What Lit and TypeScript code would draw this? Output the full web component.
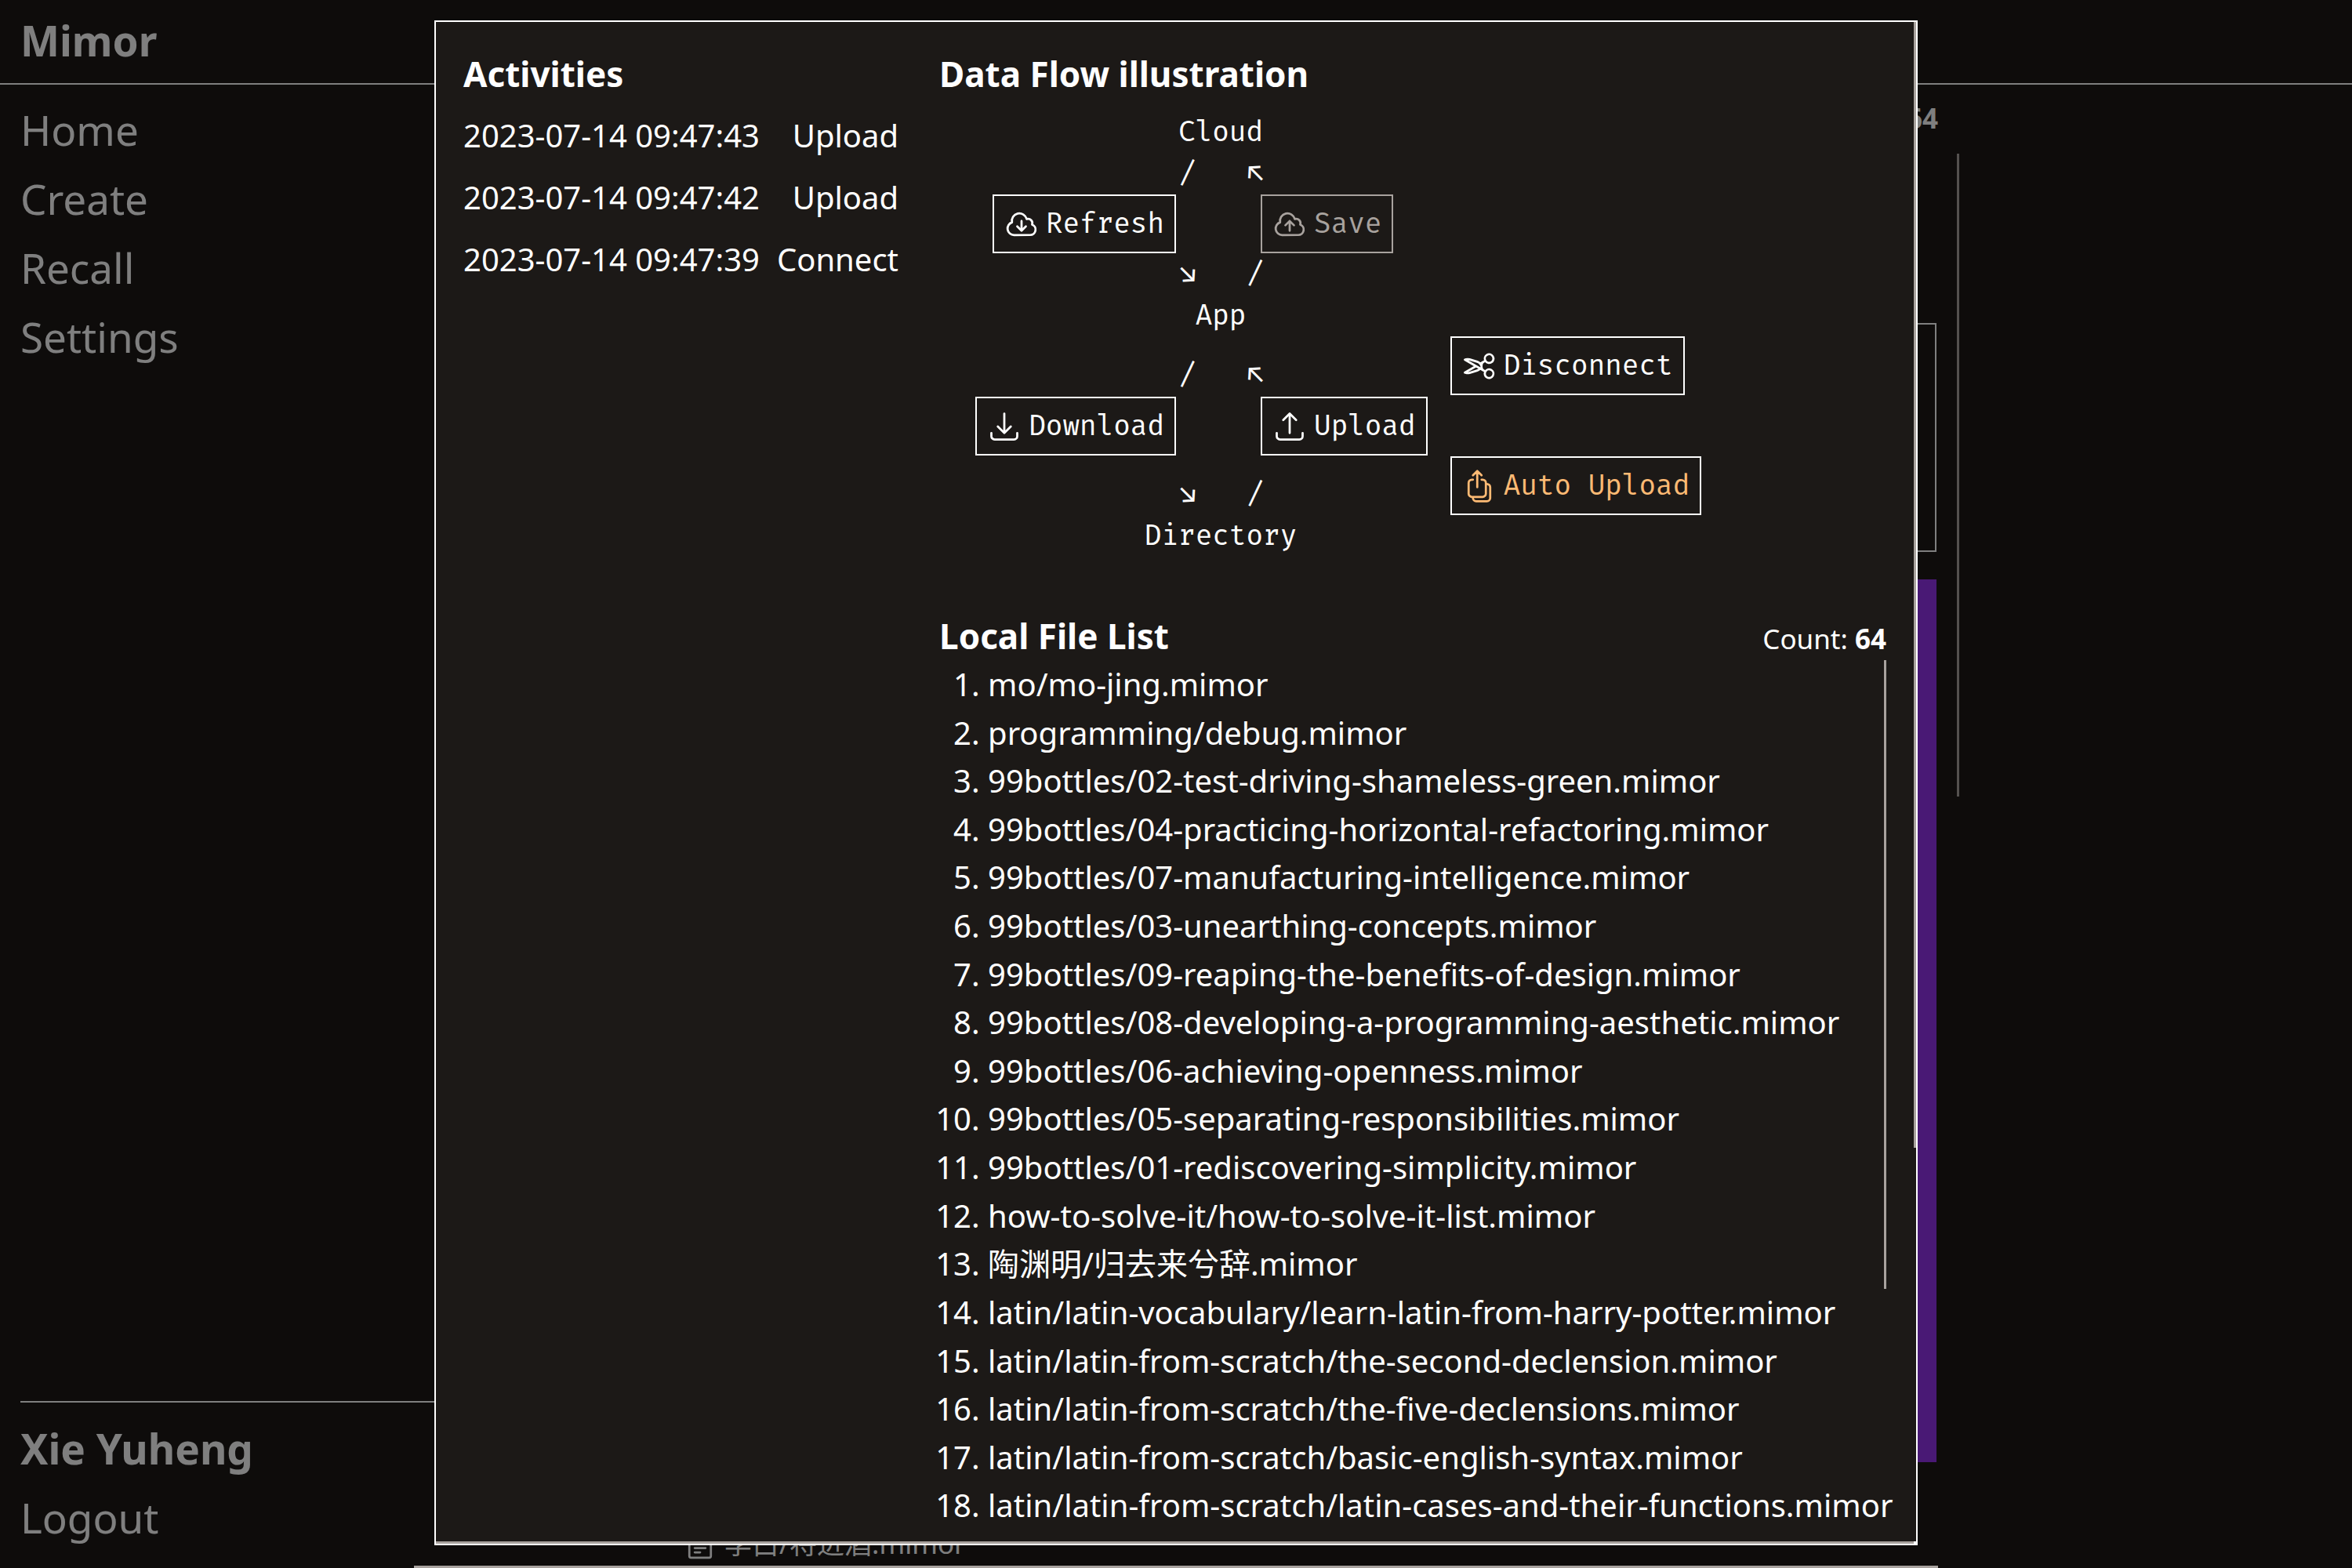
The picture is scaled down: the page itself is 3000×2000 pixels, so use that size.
import { LitElement, html, css, svg } from "lit";
import { customElement, property } from "lit/decorators.js";

const ICONS: Record<string, string[]> = {
  "cloud-down": [
    "M12 9.75v6.75m0 0l-3-3m3 3l3-3m-8.25 6a4.5 4.5 0 01-1.41-8.775 5.25 5.25 0 0110.233-2.33 3 3 0 013.758 3.848A3.752 3.752 0 0118 19.5H6.75z",
  ],
  "cloud-up": [
    "M12 16.5V9.75m0 0l3 3m-3-3l-3 3M6.75 19.5a4.5 4.5 0 01-1.41-8.775 5.25 5.25 0 0110.233-2.33 3 3 0 013.758 3.848A3.752 3.752 0 0118 19.5H6.75z",
  ],
  "tray-down": [
    "M3 16.5v2.25A2.25 2.25 0 005.25 21h13.5A2.25 2.25 0 0021 18.75V16.5M16.5 12L12 16.5m0 0L7.5 12m4.5 4.5V3",
  ],
  "tray-up": [
    "M3 16.5v2.25A2.25 2.25 0 005.25 21h13.5A2.25 2.25 0 0021 18.75V16.5m-13.5-9L12 3m0 0l4.5 4.5M12 3v13.5",
  ],
  scissors: [
    "M7.848 8.25l1.536.887M7.848 8.25a3 3 0 11-5.196-3 3 3 0 015.196 3zm1.536.887a2.165 2.165 0 011.083 1.839c.005.351.054.695.14 1.024M9.384 9.137l2.077 1.199M7.848 15.75l1.536-.887m-1.536.887a3 3 0 11-5.196 3 3 3 0 015.196-3zm1.536-.887a2.165 2.165 0 001.083-1.838c.005-.352.054-.695.14-1.025m-1.223 2.863l2.077-1.199m0-3.328a4.323 4.323 0 012.068-1.379l5.325-1.628a4.5 4.5 0 012.48-.044l.803.215-7.794 4.5m-2.882-1.664A4.331 4.331 0 0010.607 12m3.736 0l7.794 4.5-.802.215a4.5 4.5 0 01-2.48-.043l-5.326-1.629a4.324 4.324 0 01-2.068-1.379M14.343 12l-2.882 1.664",
  ],
  stack: [
    "M7.5 7.5h-.75A2.25 2.25 0 004.5 9.75v7.5a2.25 2.25 0 002.25 2.25h7.5a2.25 2.25 0 002.25-2.25v-7.5a2.25 2.25 0 00-2.25-2.25h-.75m0-3l-3-3m0 0l-3 3m3-3v11.25m6-2.25h.75a2.25 2.25 0 012.25 2.25v7.5a2.25 2.25 0 01-2.25 2.25h-7.5a2.25 2.25 0 01-2.25-2.25v-.75",
  ],
  document: [
    "M19.5 14.25v-2.625a3.375 3.375 0 00-3.375-3.375h-1.5A1.125 1.125 0 0113.5 7.125v-1.5a3.375 3.375 0 00-3.375-3.375H8.25m0 12.75h7.5m-7.5 3H12M10.5 2.25H5.625c-.621 0-1.125.504-1.125 1.125v17.25c0 .621.504 1.125 1.125 1.125h12.75c.621 0 1.125-.504 1.125-1.125V11.25a9 9 0 00-9-9z",
  ],
};

@customElement("line-icon")
class LineIcon extends LitElement {
  @property() name = "document";
  @property({ type: Boolean, reflect: true }) flip = false;

  static styles = css`
    :host {
      display: block;
      flex: none;
      width: 44px;
      height: 44px;
    }
    :host([flip]) {
      transform: scaleX(-1);
    }
    svg {
      display: block;
      width: 100%;
      height: 100%;
    }
  `;

  render() {
    return html`<svg
      viewBox="0 0 24 24"
      fill="none"
      stroke="currentColor"
      stroke-width="1.5"
      stroke-linecap="round"
      stroke-linejoin="round"
      aria-hidden="true"
    >
      ${(ICONS[this.name] ?? []).map((d) => svg`<path d=${d}></path>`)}
    </svg>`;
  }
}

@customElement("flow-button")
class FlowButton extends LitElement {
  @property() icon = "";
  @property() label = "";
  @property({ type: Boolean }) disabled = false;
  @property({ type: Boolean }) active = false;
  @property({ type: Boolean }) mirrored = false;

  static styles = css`
    :host {
      display: block;
    }
    .button {
      display: flex;
      align-items: center;
      gap: 9px;
      padding: 9px 13px;
      border: 2px solid #fff;
      background: none;
      color: #fff;
      font: inherit;
      line-height: 53px;
      white-space: nowrap;
    }
    .button:disabled {
      border-color: #a8a29e;
      color: #a8a29e;
    }
    .active {
      color: #fdba74;
    }
  `;

  render() {
    return html`<button
      type="button"
      class="button ${this.active ? "active" : ""}"
      ?disabled=${this.disabled}
    >
      <line-icon name=${this.icon} ?flip=${this.mirrored}></line-icon>
      <span>${this.label}</span>
    </button>`;
  }
}

const ACTIVITIES = [
  ["2023-07-14 09:47:43", "Upload"],
  ["2023-07-14 09:47:42", "Upload"],
  ["2023-07-14 09:47:39", "Connect"],
];

const FILES = [
  "mo/mo-jing.mimor",
  "programming/debug.mimor",
  "99bottles/02-test-driving-shameless-green.mimor",
  "99bottles/04-practicing-horizontal-refactoring.mimor",
  "99bottles/07-manufacturing-intelligence.mimor",
  "99bottles/03-unearthing-concepts.mimor",
  "99bottles/09-reaping-the-benefits-of-design.mimor",
  "99bottles/08-developing-a-programming-aesthetic.mimor",
  "99bottles/06-achieving-openness.mimor",
  "99bottles/05-separating-responsibilities.mimor",
  "99bottles/01-rediscovering-simplicity.mimor",
  "how-to-solve-it/how-to-solve-it-list.mimor",
  "陶渊明/归去来兮辞.mimor",
  "latin/latin-vocabulary/learn-latin-from-harry-potter.mimor",
  "latin/latin-from-scratch/the-second-declension.mimor",
  "latin/latin-from-scratch/the-five-declensions.mimor",
  "latin/latin-from-scratch/basic-english-syntax.mimor",
  "latin/latin-from-scratch/latin-cases-and-their-functions.mimor",
];

@customElement("app-root")
class AppRoot extends LitElement {
  static styles = css`
    :host {
      display: block;
      font-family: "Noto Sans", "Noto Sans CJK SC", sans-serif;
      font-size: 40px;
      line-height: 62px;
      color: #fff;
    }
    * {
      box-sizing: border-box;
    }
    h1,
    h2,
    ol,
    p {
      margin: 0;
      padding: 0;
    }
    a {
      color: inherit;
      text-decoration: none;
    }
    .page {
      position: relative;
      display: flex;
      flex-direction: column;
      height: 100vh;
      background: #1c1917;
      overflow: hidden;
    }
    .top {
      padding: 17px 26px 19px;
      border-bottom: 2px solid #fff;
    }
    .brand {
      font-size: 53px;
      line-height: 70px;
      font-weight: 700;
    }
    .columns {
      flex: 1;
      min-height: 0;
      display: grid;
      grid-template-columns: 502px minmax(0, 1944px) 1fr;
      padding-left: 26px;
    }
    .side {
      display: flex;
      flex-direction: column;
      justify-content: space-between;
      padding: 23px 0 29px;
      font-size: 53px;
      line-height: 70px;
    }
    .links {
      display: flex;
      flex-direction: column;
      gap: 18px;
    }
    .account {
      margin-right: -28px;
      padding-top: 24px;
      border-top: 2px solid #fff;
    }
    .user {
      font-weight: 700;
    }
    .main {
      display: flex;
      flex-direction: column;
      padding: 16px 2px 0 28px;
    }
    .count {
      font-size: 35px;
      line-height: 53px;
      white-space: nowrap;
    }
    .main .count {
      align-self: flex-end;
      margin-right: -2px;
    }
    .box {
      margin-top: 235px;
      height: 292px;
      border: 2px solid #fff;
    }
    .banner {
      flex: 1;
      margin: 35px 0 72px;
      background: #9333ea;
    }
    .entry {
      display: flex;
      align-items: center;
      gap: 9px;
      height: 63px;
      padding-left: 315px;
      font-size: 35px;
    }
    .rail {
      padding: 88px 0 0 24px;
    }
    .thumb {
      background: #a8a29e;
    }
    .rail .thumb {
      width: 3px;
      height: 820px;
    }
    .page-thumb {
      position: absolute;
      left: 528px;
      right: 528px;
      bottom: 0;
      height: 3px;
    }
    .shade {
      position: absolute;
      inset: 0;
      display: flex;
      justify-content: center;
      padding: 26px 554px 29px;
      background: rgba(0, 0, 0, 0.5);
    }
    .modal {
      position: relative;
      flex: 1;
      display: grid;
      grid-template-columns: auto minmax(0, 1fr);
      align-items: start;
      gap: 52px;
      padding: 35px 38px 0 35px;
      border: 2px solid #fff;
      background: #1c1917;
      overflow: hidden;
    }
    .modal-y {
      position: absolute;
      top: 0;
      right: 0;
      width: 3px;
      height: 74%;
    }
    .modal-x {
      position: absolute;
      left: 0;
      right: 3px;
      bottom: 0;
      height: 3px;
    }
    .corner {
      position: absolute;
      right: 0;
      bottom: 0;
      width: 3px;
      height: 3px;
      background: #fff;
    }
    .heading {
      font-size: 44px;
      line-height: 62px;
      font-weight: 700;
    }
    .activities {
      display: flex;
      flex-direction: column;
      gap: 17px;
    }
    .activity {
      display: flex;
      justify-content: space-between;
      gap: 22px;
      white-space: nowrap;
    }
    .flow {
      display: grid;
      grid-template-columns: 302px 108px auto;
      justify-content: start;
      margin-top: 17px;
      font-family: "Fira Mono", "Liberation Mono", "DejaVu Sans Mono", monospace;
      font-size: 36px;
      line-height: 53px;
    }
    .flow > * {
      align-self: end;
    }
    .lower {
      grid-column: 1 / -1;
      display: grid;
      grid-template-columns: 302px 108px auto auto;
      grid-template-rows: repeat(3, 76px);
    }
    .lower > * {
      align-self: end;
    }
    .left {
      grid-column: 1;
      justify-self: end;
    }
    .node {
      grid-column: 2;
      justify-self: center;
      padding-left: 6px;
      white-space: nowrap;
    }
    .arms {
      grid-column: 2;
      display: flex;
      justify-content: space-between;
      margin: 0 -4px 0 4px;
    }
    .right {
      grid-column: 3;
    }
    .extra {
      grid-column: 4;
      grid-row: 1 / 4;
      align-self: stretch;
      display: flex;
      flex-direction: column;
      align-items: flex-start;
      justify-content: space-between;
      padding-left: 29px;
    }
    .list-head {
      display: flex;
      justify-content: space-between;
      align-items: baseline;
      margin-top: 70px;
    }
    .list-wrap {
      position: relative;
    }
    .files {
      display: grid;
      grid-auto-rows: 1fr;
      height: 1109px;
      padding-left: 62px;
      line-height: 61px;
      white-space: nowrap;
    }
    .list-y {
      position: absolute;
      top: 0;
      right: 0;
      width: 3px;
      height: 802px;
    }
  `;

  private arms(down: string, up: string) {
    return html`<div class="arms"><span>${down}</span><span>${up}</span></div>`;
  }

  render() {
    return html`
      <div class="page">
        <header class="top"><h1 class="brand">Mimor</h1></header>
        <div class="columns">
          <aside class="side">
            <nav class="links">
              <a href="#home">Home</a>
              <a href="#create">Create</a>
              <a href="#recall">Recall</a>
              <a href="#settings">Settings</a>
            </nav>
            <div class="account links">
              <span class="user">Xie Yuheng</span>
              <a href="#logout">Logout</a>
            </div>
          </aside>
          <main class="main">
            <p class="count">Count: <b>64</b></p>
            <div class="box"></div>
            <div class="banner"></div>
            <a class="entry" href="#entry">
              <line-icon name="document"></line-icon>李白/将进酒.mimor
            </a>
          </main>
          <div class="rail"><div class="thumb"></div></div>
        </div>

        <div class="shade">
          <section class="modal" role="dialog" aria-label="Data Flow">
            <div class="activities">
              <h2 class="heading">Activities</h2>
              ${ACTIVITIES.map(
                ([time, kind]) =>
                  html`<div class="activity"><time>${time}</time><span>${kind}</span></div>`
              )}
            </div>
            <div>
              <h2 class="heading">Data Flow illustration</h2>
              <div class="flow">
                <span class="node">Cloud</span>
                ${this.arms("/", "↖")}
                <flow-button class="left" icon="cloud-down" label="Refresh"></flow-button>
                <flow-button class="right" icon="cloud-up" label="Save" disabled></flow-button>
                ${this.arms("↘", "/")}
                <span class="node">App</span>
                <div class="lower">
                  ${this.arms("/", "↖")}
                  <flow-button class="left" icon="tray-down" label="Download"></flow-button>
                  <flow-button class="right" icon="tray-up" label="Upload"></flow-button>
                  ${this.arms("↘", "/")}
                  <div class="extra">
                    <flow-button icon="scissors" label="Disconnect" mirrored></flow-button>
                    <flow-button icon="stack" label="Auto Upload" active></flow-button>
                  </div>
                </div>
                <span class="node">Directory</span>
              </div>
              <div class="list-head">
                <h2 class="heading">Local File List</h2>
                <p class="count">Count: <b>64</b></p>
              </div>
              <div class="list-wrap">
                <ol class="files">
                  ${FILES.map((f) => html`<li>${f}</li>`)}
                </ol>
                <div class="thumb list-y"></div>
              </div>
            </div>
            <div class="thumb modal-y"></div>
            <div class="thumb modal-x"></div>
            <div class="corner"></div>
          </section>
        </div>
        <div class="thumb page-thumb"></div>
      </div>
    `;
  }
}
